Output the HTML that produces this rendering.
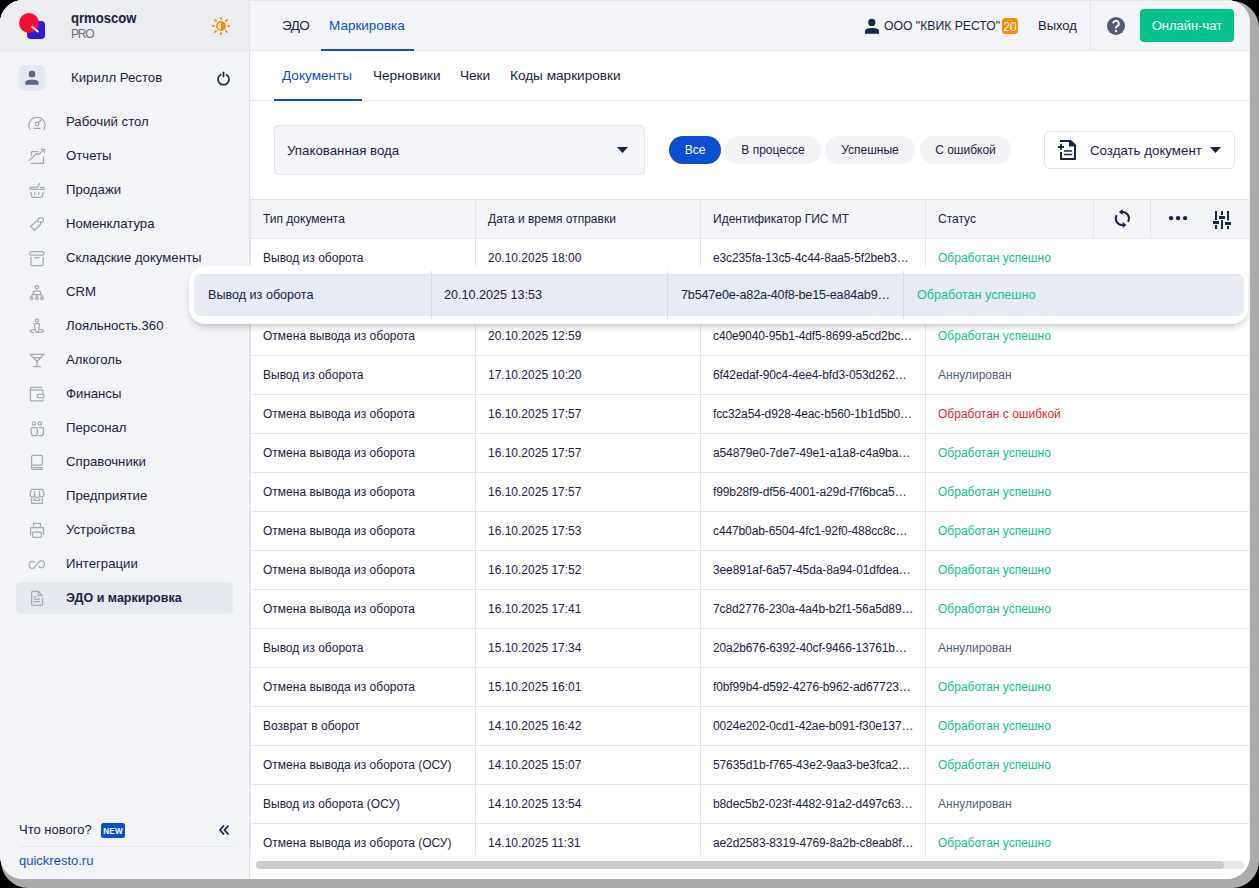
<!DOCTYPE html>
<html><head><meta charset="utf-8">
<style>
*{margin:0;padding:0;box-sizing:border-box}
html,body{width:1259px;height:888px;overflow:hidden;background:#000;font-family:"Liberation Sans",sans-serif;color:#19223f}
.shadow{position:absolute;left:1px;top:1px;width:1258px;height:887px;border-radius:27px;background:#acaaaa}
.win{position:absolute;left:0;top:0;width:1250px;height:879px;border-radius:23px;overflow:hidden;background:#fff}
.abs{position:absolute}
.side{position:absolute;left:0;top:0;width:250px;height:879px;background:#f3f4f7;border-right:1px solid #e1e3e8}
.sidehead{position:absolute;left:0;top:0;width:249px;height:52px;background:#ebedf1}
.t{position:absolute;white-space:nowrap;line-height:1}
.mi{position:absolute;left:66px;font-size:13.2px;color:#19223f;white-space:nowrap;line-height:1}
.ic{position:absolute;left:26px;width:22px;height:22px}
.topbar{position:absolute;left:250px;top:0;width:1000px;height:51px;background:#f4f5f8;border-bottom:1px solid #e3e5e9;border-top:1px solid #e3e5e9}
.tabs{position:absolute;left:250px;top:51px;width:1000px;height:50px;background:#fff;border-bottom:1px solid #e3e5e9}
.pill{position:absolute;top:136px;height:28px;border-radius:14px;background:#f2f3f6;font-size:12px;line-height:28px;text-align:center;color:#19223f}
.c{position:absolute;font-size:12px;line-height:1;white-space:nowrap;color:#19223f}
.vl{position:absolute;width:1px;background:#e3e5e9}
.ok{color:#0cc390}.err{color:#ee1c2b}.ann{color:#525d7a}
</style></head><body>
<div class="shadow"></div>
<div class="win">
  <div class="side">
    <div class="sidehead"></div>
    <!-- logo -->
    <div class="abs" style="left:27px;top:21px;width:18px;height:18px;border-radius:4px;background:#2a1fd6"></div>
    <div class="abs" style="left:19px;top:13px;width:20px;height:20px;border-radius:50%;background:#ff0a36"></div>
    <svg class="abs" style="left:0;top:0" width="50" height="50"><path d="M31.6 26.2L38.4 32" stroke="#fff" stroke-width="1.9"/></svg>
    <div class="t" style="left:71px;top:9.7px;font-size:15.5px;font-weight:bold;color:#19223f;transform:scaleX(0.845);transform-origin:0 0">qrmoscow</div>
    <div class="t" style="left:71px;top:28px;font-size:12px;letter-spacing:-1.2px;color:#6b7180">PRO</div>
    <svg class="abs" style="left:200px;top:10px" width="40" height="35" viewBox="200 10 40 35">
      <circle cx="221" cy="26" r="4.2" fill="none" stroke="#fb8c00" stroke-width="1.5"/>
      <path d="M221 21.8A4.2 4.2 0 0 1 221 30.2Z" fill="#fb8c00"/>
      <g stroke="#fb8c00" stroke-width="1.9">
        <path d="M221 17.2V19.4M221 32.6V34.8M212.2 26H214.4M227.6 26H229.8"/>
      </g>
      <g stroke="#fb8c00" stroke-width="1.7" stroke-linecap="round">
        <path d="M214.9 19.9L216.1 21.1M225.9 30.9L227.1 32.1M214.9 32.1L216.1 30.9M225.9 21.1L227.1 19.9"/>
      </g>
    </svg>
    <!-- user -->
    <div class="abs" style="left:19px;top:65px;width:26px;height:26px;border-radius:5px;background:#e5e8ef"></div>
    <svg class="abs" style="left:0;top:60px" width="50" height="40" viewBox="0 60 50 40">
      <rect x="28.8" y="70.8" width="6.4" height="6.5" rx="2.6" fill="#5b6881"/>
      <path d="M25.2 84.8V82.6C25.2 80.8 27 79.7 32 79.7S38.6 80.8 38.6 82.6V84.8Z" fill="#5b6881"/>
    </svg>
    <div class="t" style="left:71px;top:71px;font-size:13.2px;color:#19223f">Кирилл Рестов</div>
    <svg class="abs" style="left:200px;top:60px" width="40" height="40" viewBox="200 60 40 40">
      <path d="M220.6 74.6A5.5 5.5 0 1 0 226.4 74.6" fill="none" stroke="#1c2a4a" stroke-width="1.7" stroke-linecap="round"/>
      <path d="M223.5 72.3V76.5" stroke="#1c2a4a" stroke-width="1.7" stroke-linecap="round"/>
    </svg>
    <div class="mi" style="top:115px">Рабочий стол</div><div class="mi" style="top:149px">Отчеты</div><div class="mi" style="top:183px">Продажи</div><div class="mi" style="top:217px">Номенклатура</div><div class="mi" style="top:251px">Складские документы</div><div class="mi" style="top:285px">CRM</div><div class="mi" style="top:319px">Лояльность.360</div><div class="mi" style="top:353px">Алкоголь</div><div class="mi" style="top:387px">Финансы</div><div class="mi" style="top:421px">Персонал</div><div class="mi" style="top:455px">Справочники</div><div class="mi" style="top:489px">Предприятие</div><div class="mi" style="top:523px">Устройства</div><div class="mi" style="top:557px">Интеграции</div><div class="abs" style="left:16px;top:582px;width:217px;height:32px;border-radius:5px;background:#e5e8ee"></div><div class="mi" style="top:592px;font-weight:bold;font-size:12.5px">ЭДО и маркировка</div>
    <svg class="abs" style="left:0;top:0" width="250" height="879" viewBox="0 0 250 879" fill="none" stroke="#a3a9b5" stroke-width="1.25" stroke-linecap="round" stroke-linejoin="round">
<path d="M29.9 129.3A8.1 8.1 0 1 1 44.1 129.3"/><circle cx="37" cy="124" r="1.8"/><path d="M38.3 122.7L41 120.1"/><path d="M34 128.4H40"/>
<path d="M31.5 155.5V151.5H37.9"/><path d="M43.5 156.9V163.3H31.3"/><path d="M29.3 160.4L36.9 153.3L38.7 154.5L44.1 149.4"/><path d="M41.1 149.3H44.3V152.5"/>
<path d="M37.5 187.4H30.8A0.9 0.9 0 0 0 30.8 189.4H43.2A0.9 0.9 0 0 0 43.2 187.4H40.6"/><path d="M37.5 187.2L39.6 183.4"/><path d="M30.9 192.3L31.7 196.4A1 1 0 0 0 32.7 197.3H41.3A1 1 0 0 0 42.3 196.4L43.1 192.3"/><path d="M34.7 192.3V194.5M38.7 192.3V194.5"/>
<path d="M37.2 220.6L30.6 226.3L34.6 230.4L40.6 224.3V221.4"/><path d="M38.6 222.2A2.8 2.8 0 1 1 42.3 222.6"/>
<rect x="29.9" y="251.7" width="14" height="3.4" rx="1.2"/><path d="M31 257.3V264.6A1 1 0 0 0 32 265.6H42.1A1 1 0 0 0 43.1 264.6V257.3"/><path d="M34.8 257.6H39.1"/>
<circle cx="36.9" cy="287.3" r="1.7"/><path d="M33.2 294.5V292.2A1 1 0 0 1 34.2 291.1H39.6A1 1 0 0 1 40.6 292.2V294.5"/><path d="M31.6 296.8V296A1.4 1.4 0 0 1 33 294.6H40.8A1.4 1.4 0 0 1 42.2 296V296.8M36.9 294.6V296.8"/><circle cx="31.6" cy="298.3" r="1.4"/><circle cx="36.9" cy="298.3" r="1.4"/><circle cx="42" cy="298.3" r="1.4"/>
<ellipse cx="36.9" cy="320.5" rx="1.7" ry="1.3"/><path d="M34.5 323.6H39.3C39.6 326 38.6 328 38.4 331.8H35.5C35.2 328 34.2 326 34.5 323.6Z"/><path d="M35.5 329.5C32 329.3 30.2 330 30.2 331 C30.2 332 31.5 332.5 33.5 332.4M38.5 329.5C42 329.3 43.8 330 43.8 331C43.8 332.2 41 332.6 36.5 332.4"/>
<path d="M30.3 354.3H43.8L37 361.5Z"/><path d="M34.5 357.6H39.7"/><path d="M37 361.5V366.4"/><path d="M33.5 366.5H40.6"/>
<path d="M41.9 387.4H31.6A1.2 1.2 0 0 0 30.4 388.6V399.6A1.2 1.2 0 0 0 31.6 400.8H41.8A1.2 1.2 0 0 0 43 399.6"/><path d="M31.2 389.8H41.6A1.4 1.4 0 0 1 43 391.2V394.3"/><rect x="37.3" y="394.4" width="6.6" height="3.3" rx="1"/>
<circle cx="34" cy="423.5" r="1.7"/><circle cx="39.9" cy="423.5" r="1.7"/><path d="M31.1 432.3V428.6A1.1 1.1 0 0 1 32.2 427.5H36.3A1.1 1.1 0 0 1 37.4 428.6V432.3L36.5 435.5H32.1Z"/><path d="M39.3 427.5H42.5A1.1 1.1 0 0 1 43.6 428.6V432.3L42.6 435.5H38.5"/>
<path d="M31.6 468.6V456.9A1.5 1.5 0 0 1 33.1 455.4H40.9A1.5 1.5 0 0 1 42.4 456.9V463.7A1.5 1.5 0 0 1 40.9 465.2H33.1A1.5 1.5 0 0 0 31.6 466.8"/><path d="M33.2 467.6H42.4M31.7 468.6A1 1 0 0 0 32.7 469.4H42.4"/>
<path d="M31.2 489.3H42.8L44 494.2A2 2 0 0 1 39.5 495M39.5 495A2.4 2.4 0 0 1 34.5 495M34.5 495A2 2 0 0 1 30.1 494.2L31.2 489.3"/><path d="M34.5 491.3V495M39.5 491.3V495"/><path d="M31.6 498.3V503.3H42.4V498.3"/><path d="M34.1 498.3V500.4H39.7V498.3"/>
<path d="M33.5 526.2V523.3H40.4V527.2"/><path d="M30.6 534.6V527.6H43.5V534.6"/><rect x="32.5" y="532" width="8.9" height="5.3" rx="1"/>
<path d="M34.5 562.4A3.2 3.5 0 1 0 35.2 566.4L39.2 561.6A3.2 3.5 0 1 1 38.6 566.2"/>
<path d="M38.2 591.3H32.9A1.3 1.3 0 0 0 31.6 592.6V604A1.3 1.3 0 0 0 32.9 605.3H41.3A1.3 1.3 0 0 0 42.6 604V598.2"/><path d="M38.3 591.4V595.7H42.5Z"/><path d="M34.1 596.5H35.9M34.1 599.2H39.7M34.1 601.7H39.7"/>
</svg>
    <!-- bottom -->
    <div class="t" style="left:19px;top:823px;font-size:13px;color:#19223f">Что нового?</div>
    <div class="abs" style="left:101px;top:823px;width:24px;height:15px;border-radius:2.5px;background:#0650cf;color:#fff;font-size:8.2px;font-weight:bold;line-height:17px;letter-spacing:0.2px;text-align:center">NEW</div>
    <svg class="abs" style="left:217px;top:823px" width="14" height="14" viewBox="0 0 14 14"><path d="M7 2.5 3 7l4 4.5M11.5 2.5 7.5 7l4 4.5" fill="none" stroke="#14264a" stroke-width="1.8"/></svg>
    <div class="abs" style="left:19px;top:846px;width:215px;height:1px;background:#e4e6ec"></div>
    <div class="t" style="left:19px;top:854px;font-size:13px;color:#0b4fd0">quickresto.ru</div>
  </div>
  <div class="topbar"></div>
  <div class="t" style="left:282px;top:19px;font-size:13.5px;letter-spacing:-0.6px;color:#19223f">ЭДО</div>
  <div class="t" style="left:329px;top:19px;font-size:13.5px;color:#0b4fd0">Маркировка</div>
  <div class="abs" style="left:321px;top:49px;width:93px;height:2px;background:#0b4fd0"></div>
  <svg class="abs" style="left:858px;top:10px" width="30" height="30" viewBox="858 10 30 30"><circle cx="871.8" cy="22.4" r="3.6" fill="#14264a"/><path d="M865 33.8V31.2C865 29.2 867.5 28.1 872 28.1S879 29.2 879 31.2V33.8Z" fill="#14264a"/></svg>
  <div class="t" style="left:884px;top:20px;font-size:12.2px;color:#19223f">ООО "КВИК РЕСТО"</div>
  <div class="abs" style="left:1002px;top:18px;width:16px;height:16px;border-radius:3.5px;background:#ff8c00;color:#fff;font-size:12px;line-height:18px;text-align:center">20</div>
  <div class="t" style="left:1038px;top:19px;font-size:13px;color:#19223f">Выход</div>
  <div class="abs" style="left:1090px;top:1px;width:1px;height:50px;background:#e3e5e9"></div>
  <svg class="abs" style="left:1106px;top:16px" width="20" height="20" viewBox="0 0 20 20"><circle cx="10" cy="10" r="9" fill="#525b73"/><path d="M7.2 7.6a2.8 2.8 0 1 1 3.9 2.6c-.8.4-1.1.9-1.1 1.8v.5" fill="none" stroke="#fff" stroke-width="1.9"/><circle cx="10" cy="15" r="1.2" fill="#fff"/></svg>
  <div class="abs" style="left:1140px;top:9px;width:94px;height:33px;border-radius:4px;background:#05c28d;color:#fff;font-size:13px;line-height:33px;text-align:center">Онлайн-чат</div>

  <div class="tabs"></div>
  <div class="t" style="left:282px;top:69px;font-size:13.6px;color:#0b4fd0">Документы</div>
  <div class="t" style="left:373px;top:69px;font-size:13.6px;color:#19223f">Черновики</div>
  <div class="t" style="left:460px;top:69px;font-size:13.6px;color:#19223f">Чеки</div>
  <div class="t" style="left:510px;top:69px;font-size:13.6px;color:#19223f">Коды маркировки</div>
  <div class="abs" style="left:274px;top:99px;width:88px;height:2px;background:#0b4fd0"></div>

  <div class="abs" style="left:274px;top:125px;width:371px;height:50px;border-radius:4px;background:#f4f5f8;border:1px solid #e3e5e9"></div>
  <div class="t" style="left:287px;top:144px;font-size:13.3px;color:#19223f">Упакованная вода</div>
  <svg class="abs" style="left:615px;top:146px" width="14" height="8" viewBox="0 0 14 8"><path d="M2 1H13L7.5 7Z" fill="#14264a"/></svg>

  <div class="pill" style="left:669px;width:52px;background:#0b4fd0;color:#fff">Все</div>
  <div class="pill" style="left:725px;width:96px">В процессе</div>
  <div class="pill" style="left:825px;width:90px">Успешные</div>
  <div class="pill" style="left:920px;width:91px">С ошибкой</div>

  <div class="abs" style="left:1044px;top:131px;width:191px;height:38px;border-radius:6px;background:#fff;border:1px solid #e1e3e8"></div>
  <svg class="abs" style="left:1050px;top:132px" width="40" height="36" viewBox="1050 132 40 36">
    <path d="M1061 142V141H1070.5L1075 145.5V159H1061V152" fill="none" stroke="#14264a" stroke-width="2"/>
    <path d="M1069 140H1070.8L1076 145.2V146.6H1069Z" fill="#14264a"/>
    <path d="M1058 147H1064M1061 144V150" stroke="#14264a" stroke-width="1.8"/>
    <path d="M1064 151H1072M1064 154.5H1072" stroke="#14264a" stroke-width="1.7"/>
  </svg>
  <div class="t" style="left:1090px;top:144px;font-size:13.3px;color:#19223f">Создать документ</div>
  <svg class="abs" style="left:1209px;top:146px" width="14" height="8" viewBox="0 0 14 8"><path d="M1 1H12L6.5 7Z" fill="#14264a"/></svg>

  <!-- table header -->
  <div class="abs" style="left:250px;top:199px;width:1000px;height:40px;background:#f4f5f8;border-top:1px solid #e3e5e9;border-bottom:1px solid #e3e5e9"></div>
  <div class="c" style="left:263px;top:213px">Тип документа</div>
  <div class="c" style="left:488px;top:213px">Дата и время отправки</div>
  <div class="c" style="left:713px;top:213px">Идентификатор ГИС МТ</div>
  <div class="c" style="left:938px;top:213px">Статус</div>
  <svg class="abs" style="left:1112px;top:208px" width="21" height="21" viewBox="0 0 21 21">
    <path d="M10.3 4A6.5 6.5 0 0 1 16.4 13.2" fill="none" stroke="#14264a" stroke-width="2" stroke-linecap="round"/>
    <path d="M4.4 7.8A6.5 6.5 0 0 0 11 17" fill="none" stroke="#14264a" stroke-width="2" stroke-linecap="round"/>
    <path d="M6.9 4L10.6 0.9V7.1Z" fill="#14264a"/>
    <path d="M14.4 17L10.7 14.1V20Z" fill="#14264a"/>
  </svg>
  <svg class="abs" style="left:1160px;top:203px" width="80" height="32" viewBox="1160 203 80 32" fill="#14264a">
    <circle cx="1171.1" cy="218.1" r="2.2"/><circle cx="1178.1" cy="218.1" r="2.2"/><circle cx="1185.1" cy="218.1" r="2.2"/>
    <rect x="1215" y="211" width="2" height="9"/><rect x="1213" y="221" width="6" height="3"/><rect x="1215" y="225" width="2" height="4"/>
    <rect x="1221" y="211" width="2" height="4"/><rect x="1219" y="216" width="6" height="3"/><rect x="1221" y="220" width="2" height="9"/>
    <rect x="1227" y="211" width="2" height="9.5"/><rect x="1225" y="222" width="6" height="3"/><rect x="1227" y="226" width="2" height="3"/>
  </svg>
  
  <div class="vl" style="left:250px;top:199px;height:656px"></div><div class="vl" style="left:475px;top:199px;height:656px"></div><div class="vl" style="left:700px;top:199px;height:656px"></div><div class="vl" style="left:925px;top:199px;height:656px"></div><div class="vl" style="left:1093px;top:199px;height:40px"></div><div class="vl" style="left:1150px;top:199px;height:40px"></div>
  <div class="c" style="left:263px;top:252px">Вывод из оборота</div><div class="c" style="left:488px;top:252px">20.10.2025 18:00</div><div class="c" style="left:713px;top:252px;letter-spacing:-0.12px">e3c235fa-13c5-4c44-8aa5-5f2beb3…</div><div class="c ok" style="left:938px;top:252px">Обработан успешно</div><div class="abs" style="left:250px;top:277px;width:1000px;height:1px;background:#e3e5e9"></div><div class="c" style="left:263px;top:330px">Отмена вывода из оборота</div><div class="c" style="left:488px;top:330px">20.10.2025 12:59</div><div class="c" style="left:713px;top:330px;letter-spacing:-0.12px">c40e9040-95b1-4df5-8699-a5cd2bc…</div><div class="c ok" style="left:938px;top:330px">Обработан успешно</div><div class="abs" style="left:250px;top:355px;width:1000px;height:1px;background:#e3e5e9"></div><div class="c" style="left:263px;top:369px">Вывод из оборота</div><div class="c" style="left:488px;top:369px">17.10.2025 10:20</div><div class="c" style="left:713px;top:369px;letter-spacing:-0.12px">6f42edaf-90c4-4ee4-bfd3-053d262…</div><div class="c ann" style="left:938px;top:369px">Аннулирован</div><div class="abs" style="left:250px;top:394px;width:1000px;height:1px;background:#e3e5e9"></div><div class="c" style="left:263px;top:408px">Отмена вывода из оборота</div><div class="c" style="left:488px;top:408px">16.10.2025 17:57</div><div class="c" style="left:713px;top:408px;letter-spacing:-0.12px">fcc32a54-d928-4eac-b560-1b1d5b0…</div><div class="c err" style="left:938px;top:408px">Обработан с ошибкой</div><div class="abs" style="left:250px;top:433px;width:1000px;height:1px;background:#e3e5e9"></div><div class="c" style="left:263px;top:447px">Отмена вывода из оборота</div><div class="c" style="left:488px;top:447px">16.10.2025 17:57</div><div class="c" style="left:713px;top:447px;letter-spacing:-0.12px">a54879e0-7de7-49e1-a1a8-c4a9ba…</div><div class="c ok" style="left:938px;top:447px">Обработан успешно</div><div class="abs" style="left:250px;top:472px;width:1000px;height:1px;background:#e3e5e9"></div><div class="c" style="left:263px;top:486px">Отмена вывода из оборота</div><div class="c" style="left:488px;top:486px">16.10.2025 17:57</div><div class="c" style="left:713px;top:486px;letter-spacing:-0.12px">f99b28f9-df56-4001-a29d-f7f6bca5…</div><div class="c ok" style="left:938px;top:486px">Обработан успешно</div><div class="abs" style="left:250px;top:511px;width:1000px;height:1px;background:#e3e5e9"></div><div class="c" style="left:263px;top:525px">Отмена вывода из оборота</div><div class="c" style="left:488px;top:525px">16.10.2025 17:53</div><div class="c" style="left:713px;top:525px;letter-spacing:-0.12px">c447b0ab-6504-4fc1-92f0-488cc8c…</div><div class="c ok" style="left:938px;top:525px">Обработан успешно</div><div class="abs" style="left:250px;top:550px;width:1000px;height:1px;background:#e3e5e9"></div><div class="c" style="left:263px;top:564px">Отмена вывода из оборота</div><div class="c" style="left:488px;top:564px">16.10.2025 17:52</div><div class="c" style="left:713px;top:564px;letter-spacing:-0.12px">3ee891af-6a57-45da-8a94-01dfdea…</div><div class="c ok" style="left:938px;top:564px">Обработан успешно</div><div class="abs" style="left:250px;top:589px;width:1000px;height:1px;background:#e3e5e9"></div><div class="c" style="left:263px;top:603px">Отмена вывода из оборота</div><div class="c" style="left:488px;top:603px">16.10.2025 17:41</div><div class="c" style="left:713px;top:603px;letter-spacing:-0.12px">7c8d2776-230a-4a4b-b2f1-56a5d89…</div><div class="c ok" style="left:938px;top:603px">Обработан успешно</div><div class="abs" style="left:250px;top:628px;width:1000px;height:1px;background:#e3e5e9"></div><div class="c" style="left:263px;top:642px">Вывод из оборота</div><div class="c" style="left:488px;top:642px">15.10.2025 17:34</div><div class="c" style="left:713px;top:642px;letter-spacing:-0.12px">20a2b676-6392-40cf-9466-13761b…</div><div class="c ann" style="left:938px;top:642px">Аннулирован</div><div class="abs" style="left:250px;top:667px;width:1000px;height:1px;background:#e3e5e9"></div><div class="c" style="left:263px;top:681px">Отмена вывода из оборота</div><div class="c" style="left:488px;top:681px">15.10.2025 16:01</div><div class="c" style="left:713px;top:681px;letter-spacing:-0.12px">f0bf99b4-d592-4276-b962-ad67723…</div><div class="c ok" style="left:938px;top:681px">Обработан успешно</div><div class="abs" style="left:250px;top:706px;width:1000px;height:1px;background:#e3e5e9"></div><div class="c" style="left:263px;top:720px">Возврат в оборот</div><div class="c" style="left:488px;top:720px">14.10.2025 16:42</div><div class="c" style="left:713px;top:720px;letter-spacing:-0.12px">0024e202-0cd1-42ae-b091-f30e137…</div><div class="c ok" style="left:938px;top:720px">Обработан успешно</div><div class="abs" style="left:250px;top:745px;width:1000px;height:1px;background:#e3e5e9"></div><div class="c" style="left:263px;top:759px">Отмена вывода из оборота (ОСУ)</div><div class="c" style="left:488px;top:759px">14.10.2025 15:07</div><div class="c" style="left:713px;top:759px;letter-spacing:-0.12px">57635d1b-f765-43e2-9aa3-be3fca2…</div><div class="c ok" style="left:938px;top:759px">Обработан успешно</div><div class="abs" style="left:250px;top:784px;width:1000px;height:1px;background:#e3e5e9"></div><div class="c" style="left:263px;top:798px">Вывод из оборота (ОСУ)</div><div class="c" style="left:488px;top:798px">14.10.2025 13:54</div><div class="c" style="left:713px;top:798px;letter-spacing:-0.12px">b8dec5b2-023f-4482-91a2-d497c63…</div><div class="c ann" style="left:938px;top:798px">Аннулирован</div><div class="abs" style="left:250px;top:823px;width:1000px;height:1px;background:#e3e5e9"></div><div class="c" style="left:263px;top:837px">Отмена вывода из оборота (ОСУ)</div><div class="c" style="left:488px;top:837px">14.10.2025 11:31</div><div class="c" style="left:713px;top:837px;letter-spacing:-0.12px">ae2d2583-8319-4769-8a2b-c8eab8f…</div><div class="c ok" style="left:938px;top:837px">Обработан успешно</div><div class="abs" style="left:250px;top:862px;width:1000px;height:1px;background:#e3e5e9"></div>
  
<div class="abs" style="left:189px;top:266px;width:1059px;height:58px;border-radius:16px;background:#fff;box-shadow:0 4px 6px -1px rgba(0,0,0,0.2)"></div>
<div class="abs" style="left:194px;top:274px;width:1050px;height:42px;border-radius:7px;background:#e7ebf3;border-top:1px solid #dfe3ea"></div>
<div class="vl" style="left:431px;top:271px;height:48px;background:#dadde3"></div>
<div class="vl" style="left:667px;top:271px;height:48px;background:#dadde3"></div>
<div class="vl" style="left:903px;top:271px;height:48px;background:#dadde3"></div>
<div class="c" style="left:208px;top:289px;font-size:12.6px">Вывод из оборота</div>
<div class="c" style="left:444px;top:289px;font-size:12.6px">20.10.2025 13:53</div>
<div class="c" style="left:681px;top:289px;font-size:12.6px;letter-spacing:-0.19px">7b547e0e-a82a-40f8-be15-ea84ab9…</div>
<div class="c ok" style="left:917px;top:289px;font-size:12.6px">Обработан успешно</div>

  <div class="abs" style="left:1249px;top:0;width:1px;height:879px;background:#eeeff2"></div>
  <!-- scrollbar -->
  <div class="abs" style="left:250px;top:855px;width:1000px;height:24px;background:#fff"></div>
  <div class="abs" style="left:256px;top:861px;width:988px;height:8px;border-radius:4px;background:#e5e6e9"></div>
  <div class="abs" style="left:256px;top:861px;width:968px;height:8px;border-radius:4px;background:#cbcdd2"></div>
</div>
</body></html>
